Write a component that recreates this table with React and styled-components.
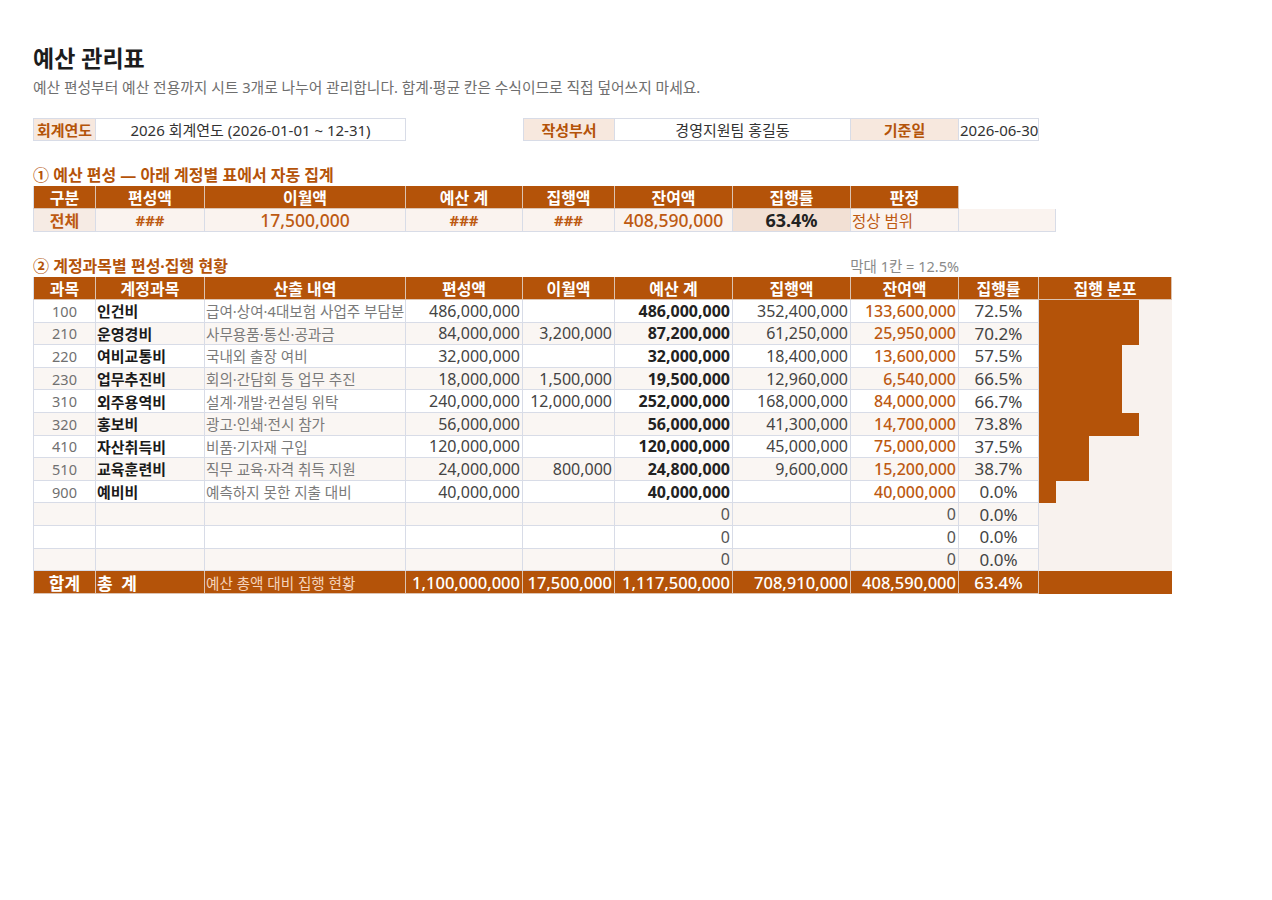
import React from 'react';
import styled, { createGlobalStyle, css } from 'styled-components';

const ORANGE = '#B45309';
const ORANGE_TEXT = '#BD5A12';
const PEACH = '#F7E8DE';
const ROW_ALT = '#FAF6F3';
const BAR_BG = '#F8F2EE';
const LINE = '#D8DCE7';
const HEAD_LINE = '#DCC3B2';

const GlobalStyle = createGlobalStyle`
  html, body { margin: 0; padding: 0; background: #fff; }
  body {
    font-family: "Noto Sans", "Noto Sans CJK KR", sans-serif;
    color: #222;
  }
`;

const Page = styled.div`
  padding: 42px 0 40px 33px;
  display: flex;
  flex-direction: column;
`;

const Title = styled.h1`
  margin: 0;
  font-size: 23px;
  line-height: 32px;
  font-weight: 700;
  color: #1c1c1c;
`;

const Subtitle = styled.p`
  margin: 2px 0 0;
  font-size: 14.75px;
  line-height: 22px;
  color: #6e6e6e;
`;

const COLS = '63px 109px 201px 117px 92px 118px 118px 108px 80px 133px';

const Sheet = styled.div`
  display: grid;
  grid-template-columns: ${(p) => p.$cols || COLS};
  grid-template-rows: ${(p) => p.$rows};
  margin-top: ${(p) => p.$mt || 0}px;
`;

const SectionTitle = styled.div`
  grid-column: span ${(p) => p.$span || 1};
  display: flex;
  align-items: flex-end;
  justify-content: ${(p) => (p.$right ? 'flex-end' : 'flex-start')};
  font-size: ${(p) => (p.$note ? '14.5px' : '16px')};
  font-weight: ${(p) => (p.$note ? 400 : 700)};
  color: ${(p) => (p.$note ? '#8a8a8a' : ORANGE)};
  white-space: nowrap;
  line-height: 20px;
  padding-bottom: 1px;
`;

const Cell = styled.div`
  grid-column: span ${(p) => p.$span || 1};
  box-sizing: border-box;
  display: flex;
  align-items: center;
  justify-content: ${(p) =>
    p.$align === 'right' ? 'flex-end' : p.$align === 'left' ? 'flex-start' : 'center'};
  padding: 0 ${(p) => (p.$align === 'left' ? 1 : 2)}px;
  overflow: hidden;
  white-space: nowrap;
  font-size: ${(p) => p.$size || 16}px;
  font-weight: ${(p) => p.$weight || 400};
  color: ${(p) => p.$color || '#3a3a3a'};
  background: ${(p) => p.$bg || '#fff'};
  border-right: 1px solid ${LINE};
  border-bottom: 1px solid ${LINE};
  ${(p) => p.$left && css`border-left: 1px solid ${LINE};`}
  ${(p) => p.$top && css`border-top: 1px solid ${LINE};`}
  ${(p) => p.$ls && css`letter-spacing: ${p.$ls};`}
`;

const HeadCell = styled(Cell)`
  font-size: ${(p) => p.$size || 16}px;
  font-weight: ${(p) => p.$weight || 700};
  color: ${(p) => p.$color || '#fff'};
  background: ${ORANGE};
  border-right-color: ${HEAD_LINE};
  border-bottom-color: ${HEAD_LINE};
`;

const Blank = styled.div`
  grid-column: span ${(p) => p.$span || 1};
`;

const BarCell = styled.div`
  display: flex;
  align-items: stretch;
  background: ${(p) => (p.$total ? ORANGE : BAR_BG)};
`;

const Bar = styled.div`
  background: ${ORANGE};
`;

const BLOCK = 16.67;

const accounts = [
  ['100', '인건비', '급여·상여·4대보험 사업주 부담분', '486,000,000', '', '486,000,000', '352,400,000', '133,600,000', '72.5%', 6],
  ['210', '운영경비', '사무용품·통신·공과금', '84,000,000', '3,200,000', '87,200,000', '61,250,000', '25,950,000', '70.2%', 6],
  ['220', '여비교통비', '국내외 출장 여비', '32,000,000', '', '32,000,000', '18,400,000', '13,600,000', '57.5%', 5],
  ['230', '업무추진비', '회의·간담회 등 업무 추진', '18,000,000', '1,500,000', '19,500,000', '12,960,000', '6,540,000', '66.5%', 5],
  ['310', '외주용역비', '설계·개발·컨설팅 위탁', '240,000,000', '12,000,000', '252,000,000', '168,000,000', '84,000,000', '66.7%', 5],
  ['320', '홍보비', '광고·인쇄·전시 참가', '56,000,000', '', '56,000,000', '41,300,000', '14,700,000', '73.8%', 6],
  ['410', '자산취득비', '비품·기자재 구입', '120,000,000', '', '120,000,000', '45,000,000', '75,000,000', '37.5%', 3],
  ['510', '교육훈련비', '직무 교육·자격 취득 지원', '24,000,000', '800,000', '24,800,000', '9,600,000', '15,200,000', '38.7%', 3],
  ['900', '예비비', '예측하지 못한 지출 대비', '40,000,000', '', '40,000,000', '', '40,000,000', '0.0%', 1],
  ['', '', '', '', '', '0', '', '0', '0.0%', 0],
  ['', '', '', '', '', '0', '', '0', '0.0%', 0],
  ['', '', '', '', '', '0', '', '0', '0.0%', 0],
];

function AccountRow({ row, index }) {
  const [code, name, desc, plan, carry, total, spent, remain, rate, blocks] = row;
  const bg = index % 2 === 1 ? ROW_ALT : '#fff';
  const isZero = remain === '0';
  return (
    <>
      <Cell $left $bg={bg} $color="#707070" $size={14.5}>{code}</Cell>
      <Cell $bg={bg} $align="left" $weight={700} $color="#1a1a1a" $size={15}>{name}</Cell>
      <Cell $bg={bg} $align="left" $color="#7a7a7a" $size={14.6}>{desc}</Cell>
      <Cell $bg={bg} $align="right" $color="#444">{plan}</Cell>
      <Cell $bg={bg} $align="right" $color="#444">{carry}</Cell>
      <Cell $bg={bg} $align="right" $weight={isZero ? 400 : 700} $color={isZero ? '#555' : '#222'}>{total}</Cell>
      <Cell $bg={bg} $align="right" $color="#444">{spent}</Cell>
      <Cell $bg={bg} $align="right" $weight={isZero ? 400 : 500} $color={isZero ? '#555' : ORANGE_TEXT}>{remain}</Cell>
      <Cell $bg={bg} $color="#444" $size={17}>{rate}</Cell>
      <BarCell>
        {blocks > 0 && <Bar style={{ width: `${blocks * BLOCK}px` }} />}
      </BarCell>
    </>
  );
}

export default function App() {
  return (
    <>
      <GlobalStyle />
      <Page>
        <Title>예산 관리표</Title>
        <Subtitle>예산 편성부터 예산 전용까지 시트 3개로 나누어 관리합니다. 합계·평균 칸은 수식이므로 직접 덮어쓰지 마세요.</Subtitle>

        <Sheet $rows="23px" $mt={20}>
          <Cell $left $top $bg={PEACH} $weight={700} $color={ORANGE} $size={15}>회계연도</Cell>
          <Cell $top $span={2} $color="#333" $size={15}>2026 회계연도 (2026-01-01 ~ 12-31)</Cell>
          <Blank />
          <Cell $left $top $bg={PEACH} $weight={700} $color={ORANGE} $size={15}>작성부서</Cell>
          <Cell $top $span={2} $color="#333" $size={15}>경영지원팀 홍길동</Cell>
          <Cell $top $bg={PEACH} $weight={700} $color={ORANGE} $size={15}>기준일</Cell>
          <Cell $top $align="left" $color="#333" $size={15}>2026-06-30</Cell>
        </Sheet>

        <Sheet
          $cols="63px 109px 201px 117px 92px 118px 118px 108px 97px"
          $rows="23px 23px 23px"
          $mt={22}
        >
          <SectionTitle $span={9}>① 예산 편성 — 아래 계정별 표에서 자동 집계</SectionTitle>
          <HeadCell $left>구분</HeadCell>
          <HeadCell>편성액</HeadCell>
          <HeadCell>이월액</HeadCell>
          <HeadCell>예산 계</HeadCell>
          <HeadCell>집행액</HeadCell>
          <HeadCell>잔여액</HeadCell>
          <HeadCell>집행률</HeadCell>
          <HeadCell>판정</HeadCell>
          <Blank />
          <Cell $left $bg="#F6EBE4" $weight={700} $color={ORANGE_TEXT} $size={16}>전체</Cell>
          <Cell $bg="#FAF3EF" $weight={700} $color={ORANGE_TEXT} $size={15}>###</Cell>
          <Cell $bg="#FAF3EF" $weight={500} $color={ORANGE_TEXT} $size={17.5}>17,500,000</Cell>
          <Cell $bg="#FAF3EF" $weight={700} $color={ORANGE_TEXT} $size={15}>###</Cell>
          <Cell $bg="#FAF3EF" $weight={700} $color={ORANGE_TEXT} $size={15}>###</Cell>
          <Cell $bg="#FAF3EF" $weight={500} $color={ORANGE_TEXT} $size={17.5}>408,590,000</Cell>
          <Cell $bg="#F2E0D4" $weight={700} $color="#222" $size={18}>63.4%</Cell>
          <Cell $bg="#FAF3EF" $align="left" $color={ORANGE_TEXT} $size={15.5}>정상 범위</Cell>
          <Cell $bg="#FAF3EF" />
        </Sheet>

        <Sheet $rows="23px 23px repeat(12, 22.6px) 23px" $mt={22}>
          <SectionTitle $span={7}>② 계정과목별 편성·집행 현황</SectionTitle>
          <SectionTitle $right $note>막대 1칸 = 12.5%</SectionTitle>
          <Blank $span={2} />
          <HeadCell $left>과목</HeadCell>
          <HeadCell>계정과목</HeadCell>
          <HeadCell>산출 내역</HeadCell>
          <HeadCell>편성액</HeadCell>
          <HeadCell>이월액</HeadCell>
          <HeadCell>예산 계</HeadCell>
          <HeadCell>집행액</HeadCell>
          <HeadCell>잔여액</HeadCell>
          <HeadCell>집행률</HeadCell>
          <HeadCell>집행 분포</HeadCell>
          {accounts.map((row, i) => (
            <AccountRow key={i} row={row} index={i} />
          ))}
          <HeadCell $left $size={17}>합계</HeadCell>
          <HeadCell $align="left" $size={17} $ls="0.12em">총 계</HeadCell>
          <HeadCell $align="left" $color="#F4D3BC" $weight={400} $size={14.6}>예산 총액 대비 집행 현황</HeadCell>
          <HeadCell $align="right" $size={16.5} $weight={500}>1,100,000,000</HeadCell>
          <HeadCell $align="right" $size={16.5} $weight={500}>17,500,000</HeadCell>
          <HeadCell $align="right" $size={16.5} $weight={500}>1,117,500,000</HeadCell>
          <HeadCell $align="right" $size={16.5} $weight={500}>708,910,000</HeadCell>
          <HeadCell $align="right" $size={16.5} $weight={500}>408,590,000</HeadCell>
          <HeadCell $size={17} $weight={500}>63.4%</HeadCell>
          <BarCell $total />
        </Sheet>
      </Page>
    </>
  );
}
